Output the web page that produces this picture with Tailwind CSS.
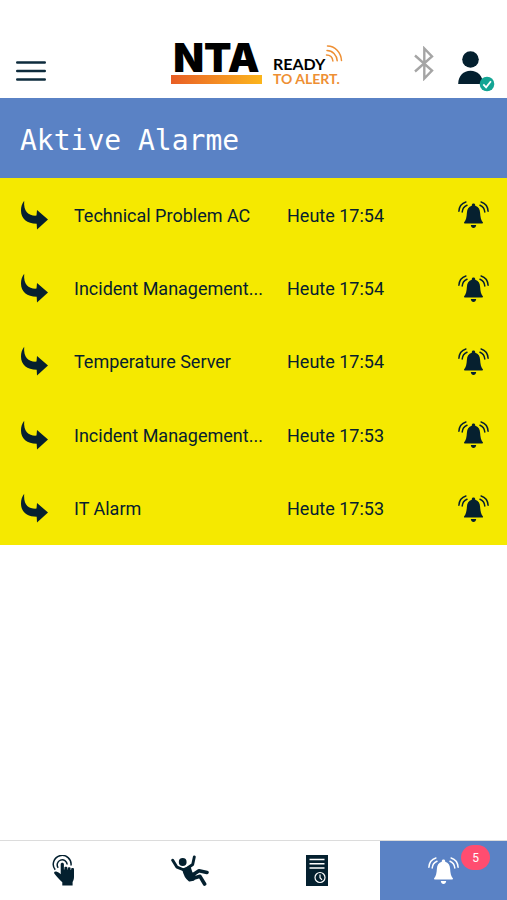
<!DOCTYPE html>
<html lang="de">
<head>
    <meta charset="UTF-8">
    <meta name="viewport" content="width=device-width, initial-scale=1.0">
    <title>Aktive Alarme</title>
    <script src="https://cdn.jsdelivr.net/npm/@tailwindcss/browser@4"></script>
</head>
<body class="bg-white font-['Roboto',sans-serif] text-[#06202f]">
    <!-- Shared icons -->
    <svg class="hidden" aria-hidden="true">
        <symbol id="icon-bell" viewBox="0 0 31 29">
            <path fill="currentColor" d="M15.5 3.6c1 0 1.7.7 1.7 1.7v.5c3.3.9 4.7 3.6 4.9 6.9.3 4.5.9 7.300 2.700 9.600.5.6.2 1.200-.6 1.200H6.800c-.8 0-1.100-.6-.6-1.200 1.800-2.300 2.400-5.100 2.700-9.600.2-3.300 1.600-6 4.900-6.900v-.5c0-1 .7-1.700 1.700-1.700z"></path>
            <path fill="currentColor" d="M12.800 25h5.400c-.2 1.900-1.300 3-2.700 3s-2.500-1.100-2.700-3z"></path>
            <path fill="none" stroke="currentColor" stroke-width="1.5" stroke-linecap="round" d="M.9 11.300C1.200 6.800 3.800 3.200 7.900 2M4.200 12C4.500 8.800 6.200 6.300 9 5.200M30.100 11.300C29.800 6.800 27.200 3.200 23.100 2M26.800 12c-.3-3.200-2-5.700-4.800-6.800"></path>
        </symbol>
        <symbol id="icon-arrow" viewBox="0 0 27 30">
            <path fill="currentColor" d="M3.200.8C1 3.500 0 6.800 0 10.500 0 18.800 6 23.700 15.700 23.800L16 29.500 27 19.500 16 10l-.5 5.600C8 16 2.300 12.500 3.200.8z"></path>
        </symbol>
    </svg>

    <div class="flex min-h-screen flex-col">
        <!-- Header -->
        <header class="grid min-h-[98px] grid-cols-[155px_1fr_auto] items-start pt-11 pr-3 pl-4">
            <button type="button" class="mt-4 w-[30px]" aria-label="Menü">
                <svg class="h-[22px] w-[30px]" viewBox="0 0 30 22" fill="none" stroke="#0d2b3c" stroke-width="2.400" stroke-linecap="round">
                    <path d="M1.200 2.500h27.600M1.200 11h27.600M1.200 19.500h27.600"></path>
                </svg>
            </button>

            <a href="#" class="flex w-[172px] items-start justify-between">
                <span class="flex w-[91px] flex-col gap-1">
                    <span class="text-center font-['Inter',sans-serif] text-[40px] leading-[27px] font-black text-black">NTA</span>
                    <span class="h-[9px] bg-linear-to-r from-[#e85d25] to-[#fbb51b]"></span>
                </span>
                <span class="relative flex w-[70px] flex-col pt-3 font-['Lato',sans-serif]">
                    <span class="text-base leading-4 font-bold text-black">READY</span>
                    <span class="text-sm leading-[14px] font-bold whitespace-nowrap text-[#ee8f33]">TO ALERT.</span>
                    <svg class="absolute top-0 right-0 h-[19px] w-[18px]" viewBox="0 0 18 19" fill="none" stroke="#ee8f33" stroke-width="1.500" stroke-linecap="round">
                        <path d="M2.500 2C10 2 16 8.500 16.500 16.500M2 6.500c5.500 0 9.800 4.500 10.200 10.300M1.500 11c3.500 0 6 2.500 6.400 6"></path>
                    </svg>
                </span>
            </a>

            <div class="flex items-start gap-6">
                <svg class="mt-0.5 h-[35px] w-5" viewBox="0 0 20 35" fill="none" stroke="#a5a5a5" stroke-width="2.400" role="img" aria-label="Bluetooth">
                    <path d="M1 9.500 18 24.500 10.300 32.500V2.500L18 10.500 1 25.500"></path>
                </svg>
                <button type="button" aria-label="Profil">
                    <svg class="mt-1.5 h-[42px] w-[37px]" viewBox="0 0 37 42">
                        <circle cx="12.500" cy="9.500" r="8.300" fill="#04202f"></circle>
                        <path fill="#04202f" d="M.2 34C.2 26 5.500 20.800 12.500 20.800S25 26 25 34z"></path>
                        <circle cx="29" cy="34" r="7.300" fill="#14a594"></circle>
                        <path d="m25.300 34.300 2.800 3 4.800-6" fill="none" stroke="#fff" stroke-width="1.800"></path>
                    </svg>
                </button>
            </div>
        </header>

        <!-- Main Content -->
        <main>
            <h1 class="bg-[#5a82c5] px-5 pt-[23px] pb-[17px] font-['DejaVu_Sans_Mono',monospace] text-[28px] leading-10 text-white">Aktive Alarme</h1>

            <ul class="grid min-h-[367px] auto-rows-fr bg-[#f5e900] text-lg">
                <li class="grid grid-cols-[53px_minmax(0,1fr)_171px_31px] items-center pr-[18px] pl-[21px]">
                    <svg class="h-[30px] w-[27px]"><use href="#icon-arrow"></use></svg>
                    <a href="#" class="truncate pt-0.5 pr-4">Technical Problem AC</a>
                    <time class="pt-0.5">Heute 17:54</time>
                    <button type="button" aria-label="Alarm"><svg class="h-[29px] w-[31px]"><use href="#icon-bell"></use></svg></button>
                </li>
                <li class="grid grid-cols-[53px_minmax(0,1fr)_171px_31px] items-center pr-[18px] pl-[21px]">
                    <svg class="h-[30px] w-[27px]"><use href="#icon-arrow"></use></svg>
                    <a href="#" class="truncate pt-0.5 pr-4">Incident Management...</a>
                    <time class="pt-0.5">Heute 17:54</time>
                    <button type="button" aria-label="Alarm"><svg class="h-[29px] w-[31px]"><use href="#icon-bell"></use></svg></button>
                </li>
                <li class="grid grid-cols-[53px_minmax(0,1fr)_171px_31px] items-center pr-[18px] pl-[21px]">
                    <svg class="h-[30px] w-[27px]"><use href="#icon-arrow"></use></svg>
                    <a href="#" class="truncate pt-0.5 pr-4">Temperature Server</a>
                    <time class="pt-0.5">Heute 17:54</time>
                    <button type="button" aria-label="Alarm"><svg class="h-[29px] w-[31px]"><use href="#icon-bell"></use></svg></button>
                </li>
                <li class="grid grid-cols-[53px_minmax(0,1fr)_171px_31px] items-center pr-[18px] pl-[21px]">
                    <svg class="h-[30px] w-[27px]"><use href="#icon-arrow"></use></svg>
                    <a href="#" class="truncate pt-0.5 pr-4">Incident Management...</a>
                    <time class="pt-0.5">Heute 17:53</time>
                    <button type="button" aria-label="Alarm"><svg class="h-[29px] w-[31px]"><use href="#icon-bell"></use></svg></button>
                </li>
                <li class="grid grid-cols-[53px_minmax(0,1fr)_171px_31px] items-center pr-[18px] pl-[21px]">
                    <svg class="h-[30px] w-[27px]"><use href="#icon-arrow"></use></svg>
                    <a href="#" class="truncate pt-0.5 pr-4">IT Alarm</a>
                    <time class="pt-0.5">Heute 17:53</time>
                    <button type="button" aria-label="Alarm"><svg class="h-[29px] w-[31px]"><use href="#icon-bell"></use></svg></button>
                </li>
            </ul>
        </main>

        <!-- Bottom Navigation -->
        <nav class="mt-auto grid h-[60px] grid-cols-4 border-t border-[#dcdcdc] text-[#04202f]">
            <a href="#" class="flex items-center justify-center" aria-label="Auslösen">
                <svg class="h-[31px] w-[23px]" viewBox="0 0 23 31">
                    <path d="M3.200 14.800A8.900 8.900 0 1 1 19 10.500M6.200 12.800A5 5 0 1 1 15.200 9.500" fill="none" stroke="currentColor" stroke-width="1.500"></path>
                    <path fill="currentColor" d="M8.700 9.200c0-2 3.200-2 3.200 0v5.200h.5v-1.700c0-1.400 2.900-1.400 2.900 0v1.900h.5v-1.400c0-1.400 2.800-1.400 2.800 0v1.800h.5v-.9c0-1.400 2.900-1.400 2.900 0v7.700c0 2-.4 3.400-1.400 5.200V30.500H10.300v-3.200C7.500 25 4.500 21.500 2.300 18.600c-.6-1.700.5-2.500 2-2 1.600.4 3 1.500 4.400 2.700z"></path>
                </svg>
            </a>
            <a href="#" class="flex items-center justify-center" aria-label="Sturz">
                <svg class="h-[31px] w-[38px]" viewBox="0 0 38 31" fill="none" stroke="currentColor" stroke-linecap="round" stroke-linejoin="round">
                    <circle cx="11.700" cy="7" r="3.900" fill="currentColor" stroke="none"></circle>
                    <path stroke-width="2.900" d="M1.700 5.300 6 12.200l7 2.800M23.300 2l-1.600 7.500-6.200 4.300"></path>
                    <path stroke-width="3.600" d="m20 21 8-5.300 8 1.700M20 24l9-2.700 4.600 7.700"></path>
                    <path fill="currentColor" stroke-width="2.500" d="m12.500 14.500 6-2 1.800 5.500 3 1.500-1 5-3.800.8c-3-2.300-5-6-6-10.800z"></path>
                </svg>
            </a>
            <a href="#" class="flex items-center justify-center" aria-label="Protokoll">
                <svg class="h-[31px] w-[22px]" viewBox="0 0 22 31" fill="none" stroke="#fff">
                    <path fill="#04202f" stroke="none" d="M0 0h22v31H0z"></path>
                    <path stroke-width="1.400" d="M3.500 4.500h15M3.500 8.700h15M3.500 13h15"></path>
                    <circle cx="14" cy="22.500" r="5" stroke-width="1.200"></circle>
                    <path stroke-width="1.200" d="M14 19.500v3.200l2 2.200"></path>
                </svg>
            </a>
            <a href="#" class="relative flex items-center justify-center bg-[#5a82c5] text-white" aria-label="Aktive Alarme">
                <svg class="h-[29px] w-[31px]"><use href="#icon-bell"></use></svg>
                <span class="absolute top-1 right-[17px] flex h-[25px] w-[29px] items-center justify-center rounded-full bg-[#ff4d70] text-xs">5</span>
            </a>
        </nav>
    </div>
</body>
</html>
